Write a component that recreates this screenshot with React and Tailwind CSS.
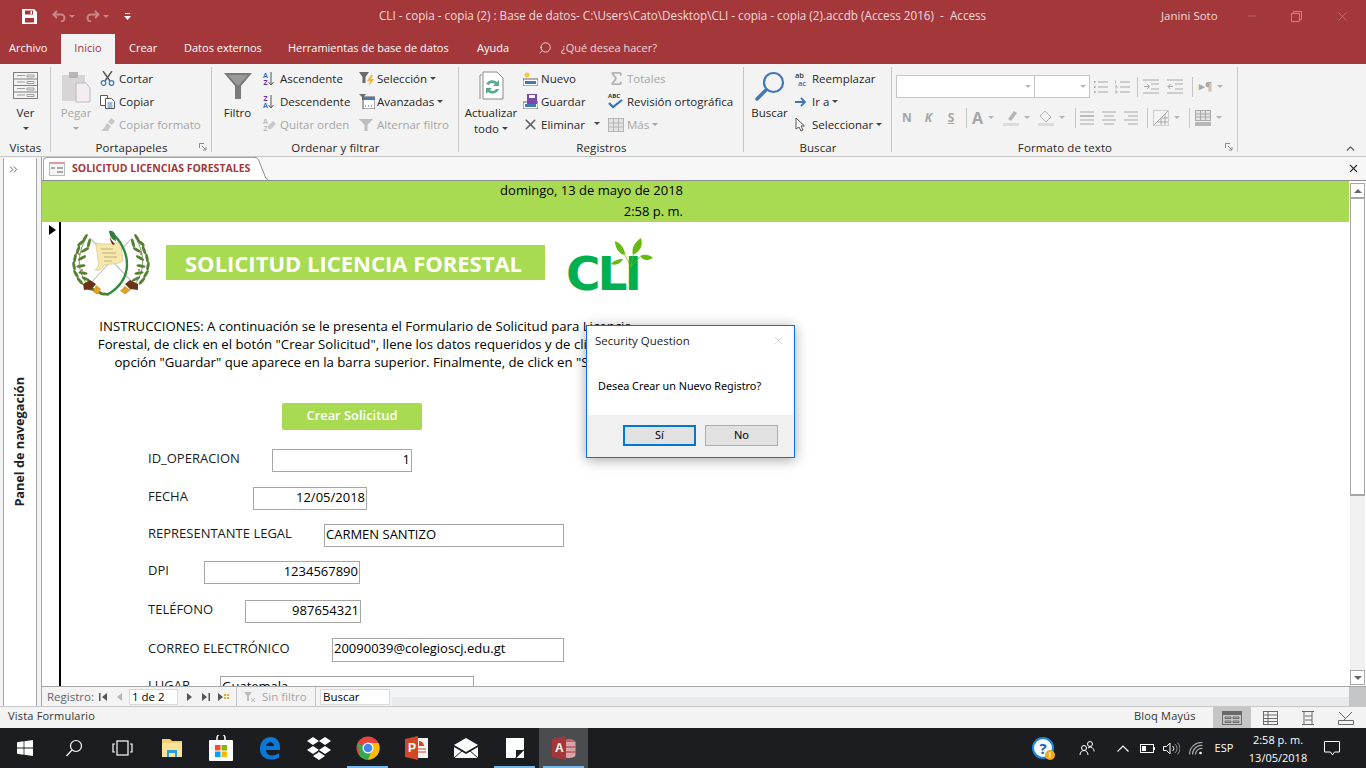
import React from 'react';
import { Search, X, ChevronsRight, ChevronUp, Sigma, Minus } from 'lucide-react';

const Caret = ({ className = 'border-t-[#444]' }) => (
  <span className={`inline-block w-0 h-0 border-x-[3px] border-x-transparent border-t-[3px] ${className}`} />
);

const Row = ({ icon, text, off, caret, gap = 'w-[19px]' }) => (
  <div className={`h-[23px] flex items-center whitespace-nowrap ${off ? 'text-[#a6a6a6]' : 'text-[#262626]'}`}>
    <span className={`${gap} flex items-center shrink-0`}>{icon}</span>
    <span>{text}</span>
    {caret && <span className="ml-[3px] flex"><Caret className={off ? 'border-t-[#a6a6a6]' : 'border-t-[#444]'} /></span>}
  </div>
);

const Launcher = () => (
  <svg width="8" height="8" viewBox="0 0 8 8" className="absolute right-[5px] bottom-[5px]">
    <path d="M.5 5V.5H5M3 3l4 4M4 7h3V4" fill="none" stroke="#8a8a8a" />
  </svg>
);

const Group = ({ w, label, launcher, children }) => (
  <div className={`${w} shrink-0 relative flex flex-col h-[89px] mt-[3px]`}>
    <span className="absolute right-0 top-0 w-px h-[85px] bg-[#c6c6c6]" />
    <div className="flex-1 flex pt-[1px] min-h-0">{children}</div>
    <div className="h-[17px] shrink-0 text-center text-[#262626] leading-[17px] tracking-[0.1px]">{label}</div>
    {launcher && <Launcher />}
  </div>
);

const Slot = ({ w, children, sep }) => (
  <span className={`${w} h-[20px] shrink-0 flex items-center justify-center gap-[5px] ${sep ? 'border-r border-[#c6c6c6]' : ''}`}>{children}</span>
);

const Lines = ({ ys, x1 = 3, x2 = 15, w = 18, children }) => (
  <svg width={w} height="16" viewBox={`0 0 ${w} 16`} stroke="#a9a9a9" fill="none">
    {ys.map(y => <path key={y} d={`M${x1} ${y}H${x2}`} />)}
    {children}
  </svg>
);

const Emblem = () => {
  const leaf = (x, y, r, c = '#55802f') => <ellipse key={`${x}-${y}`} cx={x} cy={y} rx="4.6" ry="1.5" fill={c} transform={`rotate(${r} ${x} ${y})`} />;
  const left = [[14, 8, -60], [10, 13, -40], [18, 13, -75], [7, 20, -70], [14, 20, -30], [4, 28, -80], [11, 28, -30], [3, 36, -100], [10, 36, -10], [5, 44, -120], [12, 43, 10], [9, 51, -130], [15, 49, 25], [20, 59, 10], [27, 62, 20], [33, 64, 5]];
  return (
    <svg width="80" height="70" viewBox="0 0 80 70">
      <g>{left.map(([x, y, r]) => leaf(x, y, r))}</g>
      <g transform="matrix(-1 0 0 1 80 0)">{left.slice(0, 13).map(([x, y, r]) => leaf(x, y, r))}</g>
      <circle cx="8" cy="24" r="1" fill="#c45a7a" /><circle cx="11" cy="40" r="1" fill="#c45a7a" /><circle cx="70" cy="24" r="1" fill="#c45a7a" /><circle cx="68" cy="40" r="1" fill="#c45a7a" />
      <path d="M14 10C5 28 5 48 26 64M66 10C75 28 75 48 54 64" fill="none" stroke="#5b7d34" strokeWidth=".8" />
      <path d="M19 8l44 46M61 8L19 54" stroke="#c0c0c0" strokeWidth="1.1" />
      <path d="M12 54l7-4 6 4-4 5-8 1zM67 54l-8-4-5 4 5 5 8 1z" fill="#6b3418" />
      <path d="M25 55l5 4-3 5-5-2zM54 56l5 4-5 4-5-3z" fill="#e0a020" />
      <path d="M25 13c8 2 15 1 25-1 1 6 1 14 2 19-7 4-13 2-20 5-1 4-5 5-8 4 3-3 5-6 3-9 0-6-2-12-2-18z" fill="#f6e7ad" stroke="#d3bf7c" strokeWidth=".6" />
      <path d="M30 19h12M31 23h14M33 27h13M33 31h8" stroke="#9a8a5a" strokeWidth=".6" />
      <path d="M40 3C49 9 56 22 56 34C56 48 48 58 36 65" fill="none" stroke="#2f8a3a" strokeWidth="2.4" />
      <path d="M38 1c3-1 5 1 6 3l1 7c-3-1-6-3-7-10z" fill="#2f7d3a" />
      <path d="M39 7c1 3 3 5 5 7l-2 1c-2-2-3-5-3-8z" fill="#8d1c14" />
    </svg>
  );
};

const CliLogo = () => (
  <div className="relative w-[88px] h-[56px]">
    <span className="absolute left-0 top-[11px] text-[#00b050] text-[47px] leading-[50px] font-bold font-['DejaVu_Sans',sans-serif] tracking-[-3px]">CLI</span>
    <svg width="50" height="30" viewBox="0 -1 50 30" className="absolute left-[38px] top-0">
      <path d="M11 2c6 2 10 8 10 14C15 15 11 9 11 2zM37 -1c2 7 0 13-8 17-2-7 2-13 8-17zM36 17c4-2 9-2 13 2-5 3-10 3-13-2zM7 25c2-3 7-5 12-5-2 4-7 7-12 5z" fill="#66bb11" />
      <path d="M21 16l6 12M29 16l-2 12M36 18l-9 9" stroke="#66bb11" strokeWidth=".7" fill="none" />
    </svg>
  </div>
);

const Field = ({ label, labelW, boxW, h = 'h-[23px]', mt, right, value }) => (
  <div className={`flex items-center ${mt}`}>
    <span className={`${labelW} shrink-0 whitespace-nowrap text-[#1a1a1a] leading-[18px] pb-[5px]`}>{label}</span>
    <div className={`${boxW} ${h} shrink-0 border border-[#a6a6a6] bg-white flex items-center px-[1px] pb-[2px] text-black whitespace-nowrap overflow-hidden ${right ? 'justify-end' : ''}`}>{value}</div>
  </div>
);

const Tray = ({ w, children }) => <div className={`${w} h-full flex items-center justify-center shrink-0`}>{children}</div>;

const NavBtn = ({ w, color = '#555', bar, flip, extra }) => (
  <span className={`${w} shrink-0 flex items-center justify-center gap-[1px]`}>
    <svg width={bar ? 8 : 5} height="8" viewBox={bar ? '0 0 8 8' : '0 0 5 8'} fill={color} className={flip ? '-scale-x-100' : ''}>
      <path d={bar ? 'M0 0l5 4-5 4zM6.500 0H8v8H6.500z' : 'M0 0l5 4-5 4z'} />
    </svg>
    {extra}
  </span>
);

const task = [
  <svg key="w" width="16" height="16" viewBox="0 0 16 16" fill="#fff"><path d="M0 2.2l6.6-.9v6.3H0zM7.4 1.2L16 0v7.6H7.4zM0 8.4h6.6v6.3L0 13.8zM7.4 8.4H16V16l-8.6-1.2z" /></svg>,
  <svg key="s" width="18" height="18" viewBox="0 0 18 18" fill="none" stroke="#fff" strokeWidth="1.2"><circle cx="11" cy="7" r="5.5" /><path d="M7 11l-5.5 6" /></svg>,
  <svg key="t" width="21" height="16" viewBox="0 0 21 16" fill="none" stroke="#fff" strokeWidth="1.2"><rect x="5" y="1" width="11" height="14" /><path d="M3 4H1v8h2M18 4h2v8h-2" /></svg>,
  <svg key="e" width="22" height="20" viewBox="0 0 22 20"><path d="M1 1h8l2 2h10v16H1z" fill="#f5cf6b" /><path d="M1 5h20v14H1z" fill="#fbe39a" /><path d="M6 12h10v7h-2v-4H8v4H6z" fill="#2d9fd8" /></svg>,
  <svg key="st" width="24" height="26" viewBox="0 0 24 26"><rect y="5" width="24" height="21" rx="1" fill="#fff" /><path d="M8 6V3a4 4 0 018 0v3" fill="none" stroke="#fff" strokeWidth="1.5" /><path d="M6 10h5.5v5.5H6z" fill="#f25022" /><path d="M12.5 10H18v5.5h-5.5z" fill="#7fba00" /><path d="M6 16.5h5.5V22H6z" fill="#00a4ef" /><path d="M12.5 16.5H18V22h-5.5z" fill="#ffb900" /></svg>,
  <svg key="ed" width="22" height="24" viewBox="0 0 22 24"><path d="M1 13C1 5 6 1 12 1c6 0 9 5 9 11v2H7c0 6 8 7 13 3v5c-7 3-19 2-19-9zM7 10h8c0-5-7-5-8 0z" fill="#0a78d7" /></svg>,
  <svg key="d" width="24" height="23" viewBox="0 0 24 23" fill="#fff"><path d="M6 0l6 4-6 4-6-4zM18 0l6 4-6 4-6-4zM6 9l6 4-6 4-6-4zM18 9l6 4-6 4-6-4zM12 15l6 4-6 4-6-4z" /></svg>,
  <svg key="c" width="24" height="24" viewBox="0 0 24 24"><circle cx="12" cy="12" r="11.5" fill="#e8453c" /><path d="M12 12L22 18A11.5 11.5 0 014 20.5L1.500 7z" fill="#34a853" /><path d="M12 7h10.500a11.500 11.500 0 01-10.500 16.500L17 12z" fill="#fbbc05" /><circle cx="12" cy="12" r="5.5" fill="#fff" /><circle cx="12" cy="12" r="4.3" fill="#4285f4" /></svg>,
  <svg key="p" width="23" height="24" viewBox="0 0 23 24"><path d="M9 2h14v20H9z" fill="#f3f3f3" /><path d="M14 5a5 5 0 015 5h-5z" fill="#d24726" /><path d="M13 13h8M13 16h8" stroke="#d24726" /><path d="M0 3l13-3v24L0 21z" fill="#d24726" /><text x="3" y="16" fontSize="12" fontWeight="700" fill="#fff" fontFamily="Liberation Sans">P</text></svg>,
  <svg key="m" width="24" height="20" viewBox="0 0 24 20"><path d="M0 7l12-7 12 7-12 7z" fill="#fff" /><path d="M0 9l12 7 12-7v11H0z" fill="#fff" /><path d="M0 20l9-8M24 20l-9-8" stroke="#1b1d20" /></svg>,
  <svg key="n" width="18" height="20" viewBox="0 0 18 20"><path d="M0 0h18v11l-9 9H0z" fill="#fff" /><path d="M18 12v8H10z" fill="#fff" /><path d="M10 20l8-8H10z" fill="#1b1d20" /></svg>,
  <svg key="a" width="24" height="24" viewBox="0 0 24 24"><ellipse cx="17" cy="6" rx="6.5" ry="3" fill="#c8656c" /><path d="M10 6h13.5v13c0 2-3 3-6.5 3s-6.5-1-6.5-3z" fill="#d8a3a7" /><path d="M10 11h13.5M10 16h13.5" stroke="#a4373a" /><path d="M0 3l14-3v24L0 21z" fill="#a4373a" /><text x="3" y="16" fontSize="12" fontWeight="700" fill="#fff" fontFamily="Liberation Sans">A</text></svg>,
];

const viewIcon = (
  <svg width="20" height="14" viewBox="0 0 20 14" fill="none" stroke="#6a6a6a"><rect x=".5" y=".5" width="19" height="13" /><path d="M.5 2.500h19" strokeWidth="3" /><path d="M3 6h6v1.500H3zM11 6h6v1.500h-6zM3 10h6v1.500H3zM11 10h6v1.500h-6z" /></svg>
);

const sortIcon = (top, bottom, tc, bc) => (
  <span className="flex items-center">
    <span className="text-[7px] leading-[7px] font-bold text-center">
      <span className={`block ${tc}`}>{top}</span>
      <span className={`block ${bc}`}>{bottom}</span>
    </span>
    <svg width="6" height="14" viewBox="0 0 6 14" fill="none" stroke="#555"><path d="M3 0v13M.5 10L3 13l2.500-3" /></svg>
  </span>
);

export default function App() {
  return (
    <div className="w-[1366px] h-[768px] overflow-hidden relative flex flex-col bg-[#f3f3f3] text-[11.5px] font-['Open_Sans',sans-serif]">
      {/* Title bar */}
      <div className="h-[32px] bg-[#a4373a] shrink-0 flex items-center text-[#f0dcdc]">
        <div className="w-[379px] shrink-0 flex items-center">
          <svg width="15" height="15" viewBox="0 0 15 15" className="ml-[22px]" fill="#fff"><path d="M0 0h12l3 3v12H0zM3 1.500v4h8v-4zM3 9v4.500h9V9z" fillRule="evenodd" /><path d="M8.500 2H10v3H8.500z" /></svg>
          <svg width="14" height="12" viewBox="0 0 14 12" className="ml-[15px]" fill="none" stroke="#c98688" strokeWidth="2"><path d="M5 1L1.500 4.500 5 8M2 4.500h7a3.500 3.500 0 010 7" /></svg>
          <span className="ml-[3px] flex"><Caret className="border-t-[#c98688]" /></span>
          <svg width="14" height="12" viewBox="0 0 14 12" className="ml-[11px]" fill="none" stroke="#c98688" strokeWidth="2"><path d="M9 1l3.500 3.500L9 8M12 4.500H5a3.500 3.500 0 000 7" /></svg>
          <span className="ml-[3px] flex"><Caret className="border-t-[#c98688]" /></span>
          <svg width="7" height="7" viewBox="0 0 7 7" className="ml-[15px]" fill="#fff"><path d="M1 0h5v1H1zM0 3h7L3.500 7z" /></svg>
        </div>
        <span className="w-[782px] shrink-0 whitespace-pre text-[11.7px]">CLI - copia - copia (2) : Base de datos- C:\Users\Cato\Desktop\CLI - copia - copia (2).accdb (Access 2016)  -  Access</span>
        <span className="w-[75px] shrink-0">Janini Soto</span>
        <Minus size={14} strokeWidth={1} className="text-[#c98688] ml-[9px]" />
        <svg width="11" height="11" viewBox="0 0 11 11" className="ml-[32px]" fill="none" stroke="#c98688"><path d="M.5 2.500h8v8h-8zM2.500 2.500v-2h8v8h-2" /></svg>
        <X size={15} strokeWidth={1} className="text-[#c98688] ml-[33px]" />
      </div>

      {/* Ribbon tabs */}
      <div className="h-[32px] bg-[#a4373a] shrink-0 flex items-end text-white text-[11px]">
        <span className="ml-[9px] w-[41px] h-[30px] leading-[28px] whitespace-nowrap">Archivo</span>
        <span className="ml-[11px] w-[54px] h-[30px] bg-[#f3f3f3] text-[#a4373a] text-center leading-[28px]">Inicio</span>
        <span className="ml-[14px] w-[28px] h-[30px] leading-[28px]">Crear</span>
        <span className="ml-[27px] w-[77px] h-[30px] leading-[28px] whitespace-nowrap">Datos externos</span>
        <span className="ml-[27px] w-[162px] h-[30px] leading-[28px] whitespace-nowrap">Herramientas de base de datos</span>
        <span className="ml-[27px] w-[34px] h-[30px] leading-[28px]">Ayuda</span>
        <Search size={14} strokeWidth={1.3} className="ml-[27px] mb-[9px] -scale-x-100" />
        <span className="ml-[9px] h-[30px] leading-[28px] text-[#edd9d9] whitespace-nowrap">¿Qué desea hacer?</span>
      </div>

      {/* Ribbon */}
      <div className="h-[93px] shrink-0 flex items-start relative border-b border-[#c6c6c6] bg-[#f3f3f3]">
        <Group w="w-[51px]" label="Vistas">
          <div className="w-full flex flex-col items-center">
            <svg width="25" height="27" viewBox="0 0 25 27" className="mt-[4px]" fill="none" stroke="#7f7f7f"><rect x=".5" y=".5" width="24" height="26" /><path d="M.5 7h24M.5 13.500h24M.5 20h24" /><path d="M4 3.500h8M14 3h7v2h-7zM4 10h8M14 9.500h7v2h-7zM4 16.500h8M14 16h7v2h-7zM4 23h8M14 22.500h7v2h-7z" stroke="#9d9d9d" /></svg>
            <span className="mt-[6px] text-[#262626] leading-[16px]">Ver</span>
            <span className="mt-[6px] flex"><Caret /></span>
          </div>
        </Group>

        <Group w="w-[161px]" label="Portapapeles" launcher>
          <div className="w-[49px] flex flex-col items-center text-[#a6a6a6] pl-[1px]">
            <svg width="29" height="31" viewBox="0 0 29 31" className="mt-[4px]"><rect y="3" width="23" height="26" fill="#d8d5d7" /><rect x="7" y="0" width="9" height="6" fill="#b9b6b8" /><path d="M14 11h10l4 5v14H14z" fill="#f3edf3" stroke="#bdbabc" /></svg>
            <span className="mt-[2px] leading-[16px]">Pegar</span>
            <span className="mt-[6px] flex"><Caret className="border-t-[#a6a6a6]" /></span>
          </div>
          <div className="-mt-[1px]">
            <Row icon={<svg width="15" height="15" viewBox="0 0 15 15" fill="none"><path d="M3 0l7 10M12 0L5 10" stroke="#555" strokeWidth="1.400" /><circle cx="3.500" cy="12" r="2.300" stroke="#3f78b5" strokeWidth="1.200" /><circle cx="11.500" cy="12" r="2.300" stroke="#3f78b5" strokeWidth="1.200" /></svg>} text="Cortar" />
            <Row icon={<svg width="15" height="14" viewBox="0 0 15 14" fill="#fff" stroke="#555"><path d="M.5.500h7v10h-7z" /><path d="M5.500 3.500h6l3 3v7h-9z" /><path d="M7.500 8h5M7.500 10h5M7.500 12h5" stroke="#3f78b5" /></svg>} text="Copiar" />
            <Row off icon={<svg width="16" height="13" viewBox="0 0 16 13" fill="#c8c8c8"><path d="M11 0l4 3-3 4-4-3zM7 5l4 3-3 5H1c3-2 4-5 6-8z" /></svg>} text="Copiar formato" />
          </div>
        </Group>

        <Group w="w-[247px]" label="Ordenar y filtrar">
          <div className="w-[51px] flex flex-col items-center text-[#262626]">
            <svg width="28" height="27" viewBox="0 0 28 27" className="mt-[4px]"><path d="M0 1h28L17 14v13h-6V14z" fill="#7a7a7a" /><path d="M4 3h20l-9 10h-2z" fill="#999" /></svg>
            <span className="mt-[6px] leading-[16px]">Filtro</span>
          </div>
          <div className="w-[96px] -mt-[1px]">
            <Row gap="w-[17px]" icon={sortIcon('A', 'Z', 'text-[#2e75b6]', 'text-[#7030a0]')} text="Ascendente" />
            <Row gap="w-[17px]" icon={sortIcon('Z', 'A', 'text-[#7030a0]', 'text-[#2e75b6]')} text="Descendente" />
            <Row off gap="w-[17px]" icon={<span className="flex items-center"><span className="text-[7px] leading-[7px] font-bold text-center text-[#bdbdbd]"><span className="block">A</span><span className="block">Z</span></span><svg width="8" height="8" viewBox="0 0 8 8" fill="#c8c8c8"><path d="M5 0l3 3-5 5H0V5z" /></svg></span>} text="Quitar orden" />
          </div>
          <div className="-mt-[1px]">
            <Row gap="w-[18px]" caret icon={<svg width="16" height="15" viewBox="0 0 16 15"><path d="M0 1h10L6.500 6v6h-3V6z" fill="#6b6b6b" /><path d="M12 4L8 10h3l-1 5 5-7h-3l2-4z" fill="#f2b33d" /></svg>} text="Selección" />
            <Row gap="w-[18px]" caret icon={<svg width="16" height="15" viewBox="0 0 16 15"><path d="M0 0h7L4.500 3v3H3V3z" fill="#6b6b6b" /><rect x="4" y="3" width="12" height="12" fill="#fff" stroke="#555" /><path d="M4 3h12v3H4z" fill="#4a7ab0" /><path d="M6 12h1M9 12h1M12 12h1" stroke="#555" /></svg>} text="Avanzadas" />
            <Row gap="w-[18px]" off icon={<svg width="14" height="14" viewBox="0 0 14 14"><path d="M0 1h14L8.500 7v6h-3V7z" fill="#bdbdbd" /></svg>} text="Alternar filtro" />
          </div>
        </Group>

        <Group w="w-[285px]" label="Registros">
          <div className="w-[64px] flex flex-col items-center text-[#262626] shrink-0">
            <svg width="26" height="30" viewBox="0 0 26 30" className="mt-[3px]" fill="none"><path d="M2 28V4h2M5 1h14l6 6v21H5z" stroke="#8a8a8a" fill="#fff" /><path d="M8 13a7 7 0 0111-2l2-2v6h-6l2-2a4 4 0 00-6 1zM21 18a7 7 0 01-11 3l-2 2v-6h6l-2 2a4 4 0 006-1z" fill="#5aaa8e" /></svg>
            <span className="mt-[4px] leading-[16px]">Actualizar</span>
            <span className="leading-[15px] flex items-center gap-[3px]">todo <Caret /></span>
          </div>
          <div className="w-[85px] shrink-0 -mt-[1px] relative">
            <Row gap="w-[18px]" icon={<svg width="15" height="14" viewBox="0 0 15 14"><path d="M0 7h15v7H0z" fill="#fff" stroke="#666" /><path d="M2 9h11v3H2z" fill="#3f78b5" /><circle cx="4" cy="3" r="2.500" fill="#f5c842" /></svg>} text="Nuevo" />
            <Row gap="w-[18px]" icon={<svg width="15" height="15" viewBox="0 0 15 15"><path d="M0 8h15v7H0z" fill="#fff" stroke="#666" /><path d="M2 10h11v3H2z" fill="#3f78b5" /><path d="M4 0h10v10H4z" fill="#7b4aa8" /><path d="M6 1h6v3H6z" fill="#fff" /></svg>} text="Guardar" />
            <Row gap="w-[18px]" icon={<X size={17} strokeWidth={2.3} className="text-[#606060] -ml-[1px]" />} text="Eliminar" />
            <span className="absolute left-[71px] top-[55px] flex"><Caret /></span>
          </div>
          <div className="-mt-[1px]">
            <Row off icon={<Sigma size={17} strokeWidth={2.500} className="text-[#b5b5b5]" />} text="Totales" />
            <Row icon={<span className="relative w-[16px] h-[15px] block"><span className="absolute top-[-2px] left-0 text-[6px] font-bold text-[#333]">ABC</span><svg width="15" height="10" viewBox="0 0 15 10" className="absolute bottom-0 left-0" fill="none" stroke="#2e75b6" strokeWidth="2.200"><path d="M1 4l4 4 9-7" /></svg></span>} text="Revisión ortográfica" />
            <Row off caret icon={<svg width="16" height="14" viewBox="0 0 16 14" fill="#e4e4e4" stroke="#b5b5b5"><rect x=".5" y=".5" width="15" height="13" /><path d="M.5 5h15M.5 9h15M5.500 .5v13M10.500 .5v13" /></svg>} text="Más" />
          </div>
        </Group>

        <Group w="w-[148px]" label="Buscar">
          <div className="w-[51px] flex flex-col items-center text-[#262626] shrink-0">
            <svg width="30" height="30" viewBox="0 0 30 30" className="mt-[3px]" fill="none"><circle cx="18.500" cy="11.500" r="9.500" stroke="#3f78b5" strokeWidth="2.200" /><path d="M11 19L2 28" stroke="#3f78b5" strokeWidth="3.500" strokeLinecap="round" /></svg>
            <span className="mt-[4px] leading-[16px]">Buscar</span>
          </div>
          <div className="-mt-[1px]">
            <Row gap="w-[17px]" icon={<span className="text-[7.5px] leading-[8px] font-semibold tracking-tight"><span className="block text-[#333]">ab</span><span className="block text-[#2e75b6] pl-[3px]">ac</span></span>} text="Reemplazar" />
            <Row gap="w-[17px]" caret icon={<svg width="12" height="10" viewBox="0 0 12 10" fill="none" stroke="#3f78b5" strokeWidth="1.800"><path d="M0 5h10M6 1l4 4-4 4" /></svg>} text="Ir a" />
            <Row gap="w-[17px]" caret icon={<svg width="10" height="15" viewBox="0 0 10 15" fill="#fff" stroke="#555"><path d="M1 1v11l3-2 2 4 2-1-2-4h3.500z" /></svg>} text="Seleccionar" />
          </div>
        </Group>

        <Group w="w-[346px]" label="Formato de texto" launcher>
          <div className="flex flex-col pl-[4px] pt-[7px]">
            <div className="flex items-center h-[23px]">
              <div className="w-[139px] h-[23px] bg-white border border-[#c6c6c6] flex items-center justify-end pr-[3px]"><Caret className="border-t-[#b5b5b5]" /></div>
              <div className="w-[55px] h-[23px] bg-white border border-l-0 border-[#c6c6c6] flex items-center justify-end pr-[3px]"><Caret className="border-t-[#b5b5b5]" /></div>
              <Slot w="w-[21px]"><Lines ys={[3, 8, 13]} x1={6} x2={16}><path d="M2 3h1.500M2 8h1.500M2 13h1.500" strokeWidth="2" /></Lines></Slot>
              <Slot w="w-[21px]"><Lines ys={[3, 8, 13]} x1={7} x2={17}><path d="M2.500 1.500v3M2 7h2v2H2M2 12h2v2H2" strokeWidth=".8" /></Lines></Slot>
              <Slot w="w-[6px]" sep />
              <Slot w="w-[26px]"><Lines ys={[1, 14]} x1={1} x2={17}><path d="M9 5h8M9 10h8M2 7.500h5M5 5l2.500 2.500L5 10" /></Lines></Slot>
              <Slot w="w-[22px]"><Lines ys={[1, 14]} x1={1} x2={17}><path d="M9 5h8M9 10h8M2 7.500h5M4.500 5L2 7.500 4.500 10" /></Lines></Slot>
              <Slot w="w-[7px]" sep />
              <Slot w="w-[36px]"><span className="text-[#a9a9a9] text-[11px] font-bold">▸¶</span><Caret className="border-t-[#b5b5b5]" /></Slot>
            </div>
            <div className="flex items-center h-[23px] mt-[8px] text-[#a6a6a6] font-bold text-[12px]">
              <Slot w="w-[22px]">N</Slot>
              <Slot w="w-[21px]"><i>K</i></Slot>
              <Slot w="w-[24px]"><u>S</u></Slot>
              <Slot w="w-[4px]" sep />
              <Slot w="w-[32px]"><span className="text-[16px] leading-none">A</span><Caret className="border-t-[#b5b5b5]" /></Slot>
              <Slot w="w-[35px]"><svg width="16" height="16" viewBox="0 0 16 16"><path d="M5 9l6-8 3 2-6 8z" fill="#b5b5b5" /><path d="M0 13h16v3H0z" fill="#dcdcdc" /></svg><Caret className="border-t-[#b5b5b5]" /></Slot>
              <Slot w="w-[34px]"><svg width="16" height="16" viewBox="0 0 16 16" fill="none" stroke="#b5b5b5"><path d="M2 6l5-5 6 6-5 5z" /><path d="M0 13h16v3H0z" fill="#dcdcdc" stroke="none" /></svg><Caret className="border-t-[#b5b5b5]" /></Slot>
              <Slot w="w-[8px]" sep />
              <Slot w="w-[22px]"><Lines ys={[2, 6, 10, 14]} x1={2} x2={16}><path d="M2 6h14" /></Lines></Slot>
              <Slot w="w-[22px]"><Lines ys={[2, 10]} x1={2} x2={16}><path d="M4 6h10M4 14h10" /></Lines></Slot>
              <Slot w="w-[22px]"><Lines ys={[2, 10]} x1={2} x2={16}><path d="M6 6h10M6 14h10" /></Lines></Slot>
              <Slot w="w-[6px]" sep />
              <Slot w="w-[36px]"><svg width="16" height="16" viewBox="0 0 16 16" fill="none" stroke="#a9a9a9"><path d="M.5.500h15v15H.5z" strokeDasharray="1 1" /><path d="M.5 15.500L15 1M8 8v7M12 4v11M4 12h11M8 8h7" /></svg><Caret className="border-t-[#b5b5b5]" /></Slot>
              <Slot w="w-[6px]" sep />
              <Slot w="w-[36px]"><svg width="16" height="16" viewBox="0 0 16 16" fill="#e4e4e4" stroke="#a9a9a9"><rect x=".5" y=".5" width="15" height="10" /><path d="M.5 4h15M.5 7h15M5.500 .5v10M10.500 .5v10" /><path d="M0 12h16v4H0z" fill="#b5b5b5" stroke="none" /></svg><Caret className="border-t-[#b5b5b5]" /></Slot>
            </div>
          </div>
        </Group>
        <ChevronUp size={13} strokeWidth={2.500} className="absolute right-[9px] bottom-[1px] text-[#555]" />
      </div>

      {/* Work area */}
      <div className="flex-1 flex min-h-0">
        {/* Navigation pane */}
        <div className="w-[42px] shrink-0 pl-[3px] pr-[4px] pt-[1px] border-r border-[#a6a6a6] flex flex-col">
          <div className="flex-1 bg-white border-x border-[#a6a6a6] flex flex-col items-center relative">
            <ChevronsRight size={13} strokeWidth={1.600} className="text-[#555] mt-[5px] self-start ml-[3px]" />
            <span className="mt-[201px] [writing-mode:vertical-rl] rotate-180 font-bold text-[#222] text-[12.7px] whitespace-nowrap">Panel de navegación</span>
          </div>
        </div>

        <div className="flex-1 flex flex-col min-w-0">
          {/* Document tab */}
          <div className="h-[24px] shrink-0 bg-[#f7f7f7] border-b border-[#8f8f8f] flex items-end relative">
            <div className="ml-[1px] w-[212px] h-[23px] bg-white border-t border-l border-[#a6a6a6] rounded-tl-[4px] flex items-center">
              <svg width="16" height="14" viewBox="0 0 16 14" className="ml-[5px]"><rect x=".5" y=".5" width="15" height="13" fill="#f4f4f4" stroke="#bbb" /><path d="M0 0h16v2H0z" fill="#d99ca0" /><path d="M2 5h4v2H2zM8 5h6v2H8zM8 9h6v2H8z" fill="#aaa" /></svg>
              <span className="ml-[7px] text-[#a4373a] font-bold text-[10.5px] whitespace-nowrap">SOLICITUD LICENCIAS FORESTALES</span>
            </div>
            <svg width="14" height="23" viewBox="0 0 14 23" className="-ml-px" fill="#fff"><path d="M0 1h1c2 0 3 1 4 3l7 18 2 1H0z" /><path d="M0 .5h1c2 0 3 1 4 3.500l7 17.500 2 1" fill="none" stroke="#8f8f8f" /></svg>
            <X size={13} strokeWidth={2} className="absolute right-[6px] top-[5px] text-[#333]" />
          </div>

          <div className="flex-1 flex min-h-0 bg-white">
            {/* Form */}
            <div className="flex-1 flex flex-col min-w-0 overflow-hidden">
              <div className="h-[41px] shrink-0 bg-[#a9db52] text-black text-[13px] flex flex-col items-end pr-[666px]">
                <span className="leading-[19px]">domingo, 13 de mayo de 2018</span>
                <span className="leading-[22px]">2:58 p. m.</span>
              </div>
              <div className="flex-1 flex min-h-0">
                <div className="w-[19px] shrink-0 border-r-2 border-black pt-[3px] pl-[7px]">
                  <span className="block w-0 h-0 border-y-[5px] border-y-transparent border-l-[7px] border-l-black" />
                </div>
                <div className="flex-1 min-w-0 overflow-hidden">
                  <div className="flex items-start pl-[10px] pt-[8px]">
                    <Emblem />
                    <div className="ml-[15px] mt-[15px] w-[379px] h-[35px] bg-[#a9db52] flex items-center pl-[19px] pt-[1px] text-white font-bold text-[22px] whitespace-nowrap">SOLICITUD LICENCIA FORESTAL</div>
                    <div className="ml-[21px] mt-[8px]"><CliLogo /></div>
                  </div>
                  <div className="mt-[17px] w-[609px] text-center text-[13.2px] leading-[18px] text-black whitespace-nowrap">
                    <p>INSTRUCCIONES: A continuación se le presenta el Formulario de Solicitud para Licencia</p>
                    <p>Forestal, de click en el botón "Crear Solicitud", llene los datos requeridos y de click en la</p>
                    <p>opción "Guardar" que aparece en la barra superior. Finalmente, de click en "Salir".</p>
                  </div>
                  <div className="mt-[32px] ml-[221px] w-[140px] h-[27px] pb-[2px] bg-[#a9db52] rounded-[2px] flex items-center justify-center text-white font-semibold text-[12.9px]">Crear Solicitud</div>
                  <div className="ml-[87px] text-[13px]">
                    <Field mt="mt-[19px]" label="ID_OPERACION" labelW="w-[124px]" boxW="w-[140px]" right value="1" />
                    <Field mt="mt-[15px]" label="FECHA" labelW="w-[105px]" boxW="w-[114px]" right value="12/05/2018" />
                    <Field mt="mt-[14px]" label="REPRESENTANTE LEGAL" labelW="w-[176px]" boxW="w-[240px]" value="CARMEN SANTIZO" />
                    <Field mt="mt-[14px]" label="DPI" labelW="w-[56px]" boxW="w-[156px]" right value="1234567890" />
                    <Field mt="mt-[16px]" label="TELÉFONO" labelW="w-[97px]" boxW="w-[116px]" right value="987654321" />
                    <Field mt="mt-[15px]" h="h-[24px]" label="CORREO ELECTRÓNICO" labelW="w-[184px]" boxW="w-[232px]" value="20090039@colegioscj.edu.gt" />
                    <Field mt="mt-[14px]" label="LUGAR" labelW="w-[72px]" boxW="w-[254px]" value="Guatemala" />
                  </div>
                </div>
              </div>
            </div>

            {/* Vertical scrollbar */}
            <div className="w-[17px] shrink-0 flex flex-col pl-[1px] pr-[1px] pt-[2px] pb-[1px] bg-white">
              <div className="flex-1 flex flex-col bg-[#f0f0f0]">
                <div className="h-[15px] shrink-0 border border-[#a6a6a6] bg-white flex items-center justify-center"><span className="w-0 h-0 border-x-[4px] border-x-transparent border-b-[4px] border-b-[#666]" /></div>
                <div className="h-[299px] shrink-0 bg-white border-x border-y-2 border-[#a6a6a6] -mt-px" />
                <div className="flex-1" />
                <div className="h-[15px] shrink-0 border border-[#a6a6a6] bg-white flex items-center justify-center"><span className="w-0 h-0 border-x-[4px] border-x-transparent border-t-[4px] border-t-[#666]" /></div>
              </div>
            </div>
          </div>

          {/* Record navigation */}
          <div className="h-[20px] shrink-0 border-t border-[#a6a6a6] flex items-center text-[#5b6775] bg-[#f3f3f3]">
            <span className="ml-[5px] w-[49px] shrink-0">Registro:</span>
            <NavBtn w="w-[14px]" bar flip />
            <NavBtn w="w-[19px]" color="#b5b5b5" flip />
            <div className="w-[49px] h-[16px] shrink-0 bg-white border border-[#d9d9d9] text-black leading-[14px] pl-[2px]">1 de 2</div>
            <NavBtn w="w-[22px]" />
            <NavBtn w="w-[12px]" bar />
            <NavBtn w="w-[24px]" extra={<svg width="6" height="8" viewBox="0 0 6 8" fill="#d9b02f"><path d="M0 1h2v2H0zM3 1h2v2H3zM0 4h2v2H0zM3 4h2v2H3z" /></svg>} />
            <span className="h-full w-[1px] bg-[#c6c6c6] shrink-0" />
            <svg width="12" height="12" viewBox="0 0 12 12" className="ml-[7px] shrink-0" fill="#bdbdbd"><path d="M0 1h8L5 5v5H3V5z" /><path d="M7 7l4 4M11 7l-4 4" stroke="#bdbdbd" /></svg>
            <span className="ml-[6px] w-[53px] shrink-0 text-[#a6a6a6] whitespace-nowrap">Sin filtro</span>
            <span className="h-full w-[1px] bg-[#c6c6c6] shrink-0" />
            <div className="ml-[4px] w-[70px] h-[16px] shrink-0 bg-white border border-[#d9d9d9] text-black leading-[14px] pl-[2px]">Buscar</div>
            <div className="ml-[2px] flex-1 h-full flex flex-col">
              <div className="flex-1 bg-[#f3f4f6]" />
              <div className="flex-1 bg-[#e9eaec]" />
            </div>
            <div className="w-[17px] h-full bg-[#c6c6c6] shrink-0" />
          </div>
        </div>
      </div>

      {/* Status bar */}
      <div className="h-[22px] shrink-0 border-t border-[#c6c6c6] bg-[#f3f3f3] flex items-center text-[#333] text-[11px] tracking-[0.2px]">
        <span className="ml-[8px] w-[1126px] shrink-0 pb-[3px]">Vista Formulario</span>
        <span className="w-[79px] shrink-0 pb-[3px]">Bloq Mayús</span>
        <div className="w-[38px] h-full bg-[#c6c6c6] flex items-center justify-center">{viewIcon}</div>
        <div className="w-[38px] h-full flex items-center justify-center"><svg width="15" height="14" viewBox="0 0 15 14" fill="none" stroke="#6a6a6a"><rect x=".5" y=".5" width="14" height="13" /><path d="M.5 4h14M.5 7.500h14M.5 10.500h14M5 .5v13" /></svg></div>
        <div className="w-[38px] h-full flex items-center justify-center"><svg width="12" height="14" viewBox="0 0 12 14" fill="none" stroke="#6a6a6a"><path d="M0 .5h12M0 13.500h12M2 .5v13M10 .5v13M3 5h7M3 9h7" /></svg></div>
        <div className="w-[38px] h-full flex items-center justify-center"><svg width="16" height="14" viewBox="0 0 16 14" fill="none" stroke="#6a6a6a"><path d="M1 1l6 6M14 1L7 8l-1 1M.5 9.500h15v4H.5z" /></svg></div>
      </div>

      {/* Taskbar */}
      <div className="h-[40px] shrink-0 bg-[#1b1d20] flex items-center text-white text-[11px]">
        {task.map((icon, i) => (
          <div key={i} className={`w-[49px] h-full shrink-0 flex items-center justify-center relative ${i === 11 ? 'bg-[#4a4c4f]' : ''}`}>
            {icon}
            {[7, 10, 11].includes(i) && <span className="absolute bottom-0 left-[4px] right-[4px] h-[2px] bg-[#76b9ed]" />}
          </div>
        ))}
        <div className="ml-[433px] flex h-full items-center">
          <Tray w="w-[44px]">
            <span className="relative w-[22px] h-[22px] rounded-full bg-[#f4fbff] border-[2px] border-[#1e88d8] flex items-center justify-center text-[#1565c0] font-bold text-[15px]">?<span className="absolute -right-[3px] -bottom-[3px] w-[10px] h-[10px] rounded-full bg-[#f2a81d] text-white text-[8px] leading-[10px] text-center">!</span></span>
          </Tray>
          <Tray w="w-[44px]"><svg width="16" height="16" viewBox="0 0 16 16" fill="none" stroke="#fff"><circle cx="5" cy="8" r="2.500" /><path d="M1 15c0-3 2-4.500 4-4.500S9 12 9 15" /><circle cx="11" cy="4" r="2.500" /><path d="M9 8c1-1 4-1.500 5 .5 1 1 1 2 1 3" /></svg></Tray>
          <Tray w="w-[28px]"><svg width="12" height="7" viewBox="0 0 12 7" fill="none" stroke="#fff" strokeWidth="1.200"><path d="M.5 6.500L6 1l5.500 5.500" /></svg></Tray>
          <Tray w="w-[20px]"><svg width="15" height="9" viewBox="0 0 15 9" fill="none" stroke="#fff"><rect x=".5" y=".5" width="13" height="8" /><rect x="2" y="2" width="4" height="5" fill="#fff" stroke="none" /><path d="M14.500 3v3" /></svg></Tray>
          <Tray w="w-[28px]"><svg width="17" height="13" viewBox="0 0 17 13" fill="none" stroke="#fff"><path d="M.5 4.500h3L7 1v11L3.500 8.500h-3z" /><path d="M9.500 4a3 3 0 010 5" /><path d="M12 2a6 6 0 010 9M14.500 .5a8.500 8.500 0 010 12" opacity=".5" /></svg></Tray>
          <Tray w="w-[22px]"><svg width="14" height="13" viewBox="0 0 14 13" fill="none" stroke="#aaa" strokeWidth="1.200"><path d="M.5 12.500a12 12 0 0113-12M3.500 12.500a9 9 0 0110-9M6.500 12.500a6 6 0 017-6" /><circle cx="11.500" cy="11" r="1.300" fill="#fff" stroke="none" /></svg></Tray>
          <span className="w-[34px] text-center shrink-0">ESP</span>
          <div className="w-[74px] shrink-0 text-center leading-[18px] pt-[2px]"><div>2:58 p. m.</div><div>13/05/2018</div></div>
          <Tray w="w-[34px]"><svg width="16" height="15" viewBox="0 0 16 15" fill="none" stroke="#fff"><path d="M.5.500h15v10.500h-5l-2 3-2-3h-6z" /></svg></Tray>
        </div>
      </div>

      {/* Dialog */}
      <div className="absolute left-[586px] top-[325px] w-[209px] h-[133px] bg-white border border-[#0078d7] shadow-[0_2px_12px_rgba(0,0,0,0.35)] flex flex-col font-['Noto_Sans',sans-serif] text-black">
        <div className="h-[29px] shrink-0 flex items-center justify-between pl-[8px] pr-[9px] text-[11.5px] font-['Open_Sans',sans-serif] text-[#222]">
          <span>Security Question</span>
          <X size={13} strokeWidth={1} className="text-[#b5b5b5]" />
        </div>
        <div className="flex-1 pl-[11px] pt-[22px] text-[10.8px] leading-[18px]">Desea Crear un Nuevo Registro?</div>
        <div className="h-[42px] shrink-0 bg-[#f0f0f0] flex justify-end gap-[9px] pr-[16px] pt-[10px] text-[11px]">
          <div className="w-[73px] h-[21px] bg-[#e1e1e1] border-2 border-[#0078d7] flex items-center justify-center">Sí</div>
          <div className="w-[73px] h-[21px] bg-[#e1e1e1] border border-[#adadad] flex items-center justify-center">No</div>
        </div>
      </div>
    </div>
  );
}
